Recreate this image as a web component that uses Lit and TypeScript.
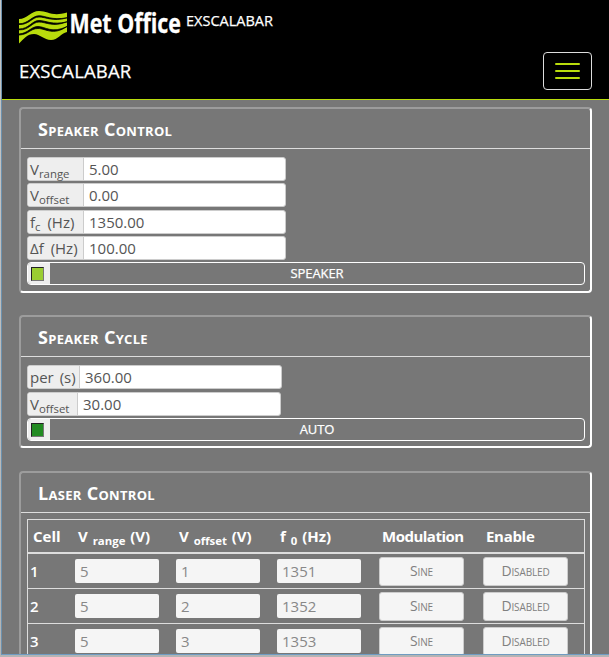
import { LitElement, html, css, svg } from "lit";
import { customElement, property } from "lit/decorators.js";

const base = css`
  * { box-sizing: border-box; }
  sub { font-size: 76%; line-height: 0; vertical-align: baseline; position: relative; bottom: -0.24em; }
`;

@customElement("site-logo")
class SiteLogo extends LitElement {
  static styles = css`
    :host { display: block; width: 164px; height: 44px; }
    svg { display: block; }
    .wave { fill: #b9dc0c; }
    .gap { fill: #000; stroke: #000; stroke-width: 0.8; }
    .word { fill: #fff; stroke: #fff; stroke-width: 0.3; font: 700 26px "Open Sans", sans-serif; }
  `;
  render() {
    return html`<svg width="164" height="44" viewBox="0 0 164 44">
      <path class="wave" d="M0 19C8 19 12 11 20 11C29 11 33 17 48 12.500V32C42 33 39 40 32 40C25 40 21 34 15 34C8 34 5 39 0 43.500Z"/>
      ${svg`
        <path class="gap" d="M0 23.800C9 24 13 15.800 20 15.800S32 20.500 48 17.800C34 22 27 17 20 17S10 25 0 24.500Z"/>
        <path class="gap" d="M0 29C10 29 13 20.500 20 20.500S33 25.500 48 21.800C34 27.500 27 22 20 22S10 30.500 0 29.800Z"/>
        <path class="gap" d="M0 34C9 33.500 12 26.500 19 26.500S33 34 48 26.500C34 36 27 28.500 19 28.500S10 34.500 0 35Z"/>`}
      <text class="word" x="50.500" y="33" textLength="111.500" lengthAdjust="spacingAndGlyphs">Met Office</text>
    </svg>`;
  }
}

@customElement("titled-panel")
class TitledPanel extends LitElement {
  @property() heading = "";
  static styles = css`
    :host {
      display: block; box-sizing: border-box; border: 2px solid; border-color: #9c9c9c #fff #fff #9c9c9c;
      border-radius: 4px;
    }
    h2 {
      margin: 0; box-sizing: border-box; height: 40px; padding: 0 17px; border-bottom: 1px solid #ddd;
      font: 700 18px/41px "Open Sans", sans-serif; font-variant: small-caps; letter-spacing: 0.3px; color: #fff;
    }
    .content { padding: 8px 5px 6px 6px; }
  `;
  render() {
    return html`<h2>${this.heading}</h2><div class="content"><slot></slot></div>`;
  }
}

@customElement("toggle-bar")
class ToggleBar extends LitElement {
  @property() label = "";
  @property({ type: Boolean }) on = false;
  static styles = css`
    * { box-sizing: border-box; }
    :host {
      display: flex; box-sizing: border-box; height: 23px; border: 1px solid #fff; border-radius: 4px;
      overflow: hidden; font: 13px/21px "Open Sans", sans-serif; letter-spacing: -0.1px; color: #fff;
      -webkit-text-stroke: 0.25px #fff;
    }
    .led-box { width: 22px; background: #eee; padding: 4px 3px; }
    .led { width: 13px; height: 14px; border: 1px solid; border-color: #222 #777 #777 #222; background: #228b22; }
    .led.on { background: #9acd32; }
    .label { flex: 1; text-align: center; }
  `;
  render() {
    return html`<div class="led-box"><div class="led ${this.on ? "on" : ""}"></div></div>
      <div class="label">${this.label}</div>`;
  }
}

const ROWS = [
  { cell: 1, range: "5", offset: "1", freq: "1351" },
  { cell: 2, range: "5", offset: "2", freq: "1352" },
  { cell: 3, range: "5", offset: "3", freq: "1353" },
];

@customElement("app-root")
class AppRoot extends LitElement {
  static styles = [base, css`
    :host {
      display: flex; flex-direction: column; height: 657px; overflow: hidden;
      font: 15px "Open Sans", sans-serif; background: linear-gradient(#c6c6c6, #b4b4b4);
    }
    .window {
      height: 655px; overflow: hidden; background: #777; border-left: 1px solid #6c91ae;
      border-bottom: 1px solid #6f9cc2; margin-left: 1px;
    }
    .nav { height: 100px; background: #000; border-bottom: 1px solid #b9dc0c; color: #fff; -webkit-text-stroke: 0.25px #fff; }
    .top { display: flex; height: 52px; padding-left: 17px; }
    .crumb { font-size: 14.5px; line-height: 20px; padding: 11px 0 0 3px; }
    .bottom { display: flex; justify-content: space-between; padding: 0 17px; }
    .brand { font-size: 18.5px; line-height: 38px; letter-spacing: 0.15px; }
    .menu {
      width: 49px; height: 38px; border: 1px solid #ddd; border-radius: 4px;
      display: flex; flex-direction: column; align-items: center; justify-content: center; gap: 5px;
    }
    .menu i { width: 25px; height: 2px; background: #b9dc0c; border-radius: 1px; }
    .main { display: flex; flex-direction: column; padding: 7px 17px 0; }
    .speaker { height: 186px; margin-bottom: 22px; }
    .cycle { height: 133px; margin-bottom: 23px; }
    .laser { height: 300px; }
    .field {
      display: flex; height: 24px; width: 259px; margin-bottom: 2px; line-height: 22px;
      background: #fff; border: 1px solid #ccc; border-radius: 3px; color: #555;
    }
    .field .name { width: 56px; flex: none; padding-left: 2px; background: #eee; border-right: 1px solid #ccc; border-radius: 2px 0 0 2px; white-space: nowrap; word-spacing: 3px; }
    .field .value { padding-left: 5px; }
    .gap { margin-bottom: 3px; }
    .w-per { width: 255px; }
    .w-per .name { width: 52px; word-spacing: 2px; }
    .w-off { width: 254px; }
    .w-off .name { width: 50px; }
    .table { margin-top: -2px; border: 1px solid #ddd; color: #fff; font-weight: 600; }
    .row { display: grid; grid-template-columns: 47px 101px 101px 102px 104px 1fr; height: 35px; border-bottom: 1px solid #ddd; align-items: center; }
    .head { height: 34px; border-bottom-width: 2px; font-size: 15px; font-weight: 700; word-spacing: 1px; }
    .head div { padding-left: 3px; white-space: nowrap; }
    .head div:first-child { padding-left: 5px; }
    .head div:nth-child(5) { letter-spacing: -0.5px; }
    .head div:nth-child(6) { letter-spacing: -0.3px; }
    .idx { padding-left: 2px; }
    .input { width: 84px; height: 24px; padding-left: 5px; line-height: 24px; background: #f5f5f5; border-radius: 2px; color: #888; font-weight: 400; }
    .button {
      width: 85px; height: 29px; line-height: 26px; border: 1px solid #ccc; border-radius: 3px; background: #f5f5f5;
      color: #808080; text-align: center; font-weight: 400; font-size: 14px; letter-spacing: -0.15px; font-variant: small-caps;
    }
  `];

  field(name: unknown, value: string, cls = "") {
    return html`<div class="field ${cls}"><div class="name">${name}</div><div class="value">${value}</div></div>`;
  }

  render() {
    return html`<div class="window">
      <div class="nav">
        <div class="top"><site-logo></site-logo><div class="crumb">EXSCALABAR</div></div>
        <div class="bottom"><div class="brand">EXSCALABAR</div><div class="menu"><i></i><i></i><i></i></div></div>
      </div>
      <div class="main">
        <titled-panel class="speaker" heading="Speaker Control">
          ${this.field(html`V<sub>range</sub>`, "5.00")}
          ${this.field(html`V<sub>offset</sub>`, "0.00", "gap")}
          ${this.field(html`f<sub>c</sub> (Hz)`, "1350.00")}
          ${this.field("Δf (Hz)", "100.00")}
          <toggle-bar label="SPEAKER" on></toggle-bar>
        </titled-panel>
        <titled-panel class="cycle" heading="Speaker Cycle">
          ${this.field("per (s)", "360.00", "w-per gap")}
          ${this.field(html`V<sub>offset</sub>`, "30.00", "w-off")}
          <toggle-bar label="AUTO"></toggle-bar>
        </titled-panel>
        <titled-panel class="laser" heading="Laser Control">
          <div class="table">
            <div class="row head">
              <div>Cell</div><div>V <sub>range</sub> (V)</div><div>V <sub>offset</sub> (V)</div>
              <div>f <sub>0</sub> (Hz)</div><div>Modulation</div><div>Enable</div>
            </div>
            ${ROWS.map((r) => html`<div class="row">
              <div class="idx">${r.cell}</div><div class="input">${r.range}</div><div class="input">${r.offset}</div>
              <div class="input">${r.freq}</div><div class="button">Sine</div><div class="button">Disabled</div>
            </div>`)}
          </div>
        </titled-panel>
      </div>
    </div>`;
  }
}
